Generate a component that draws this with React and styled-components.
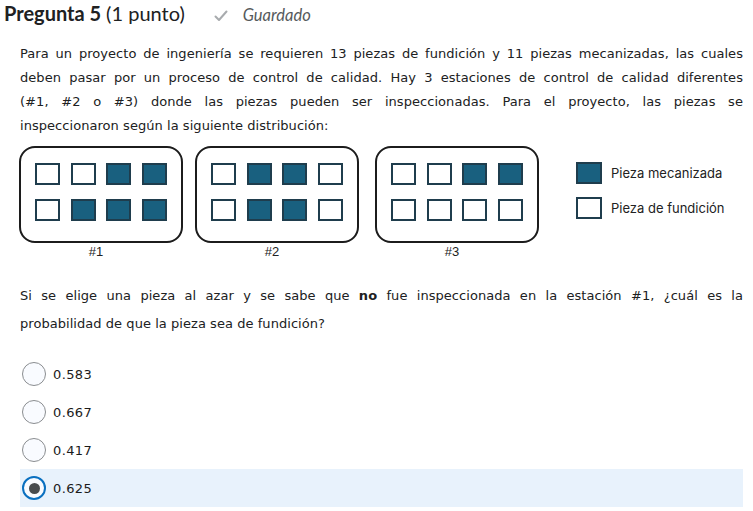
import React from "react";
import styled, { createGlobalStyle } from "styled-components";

const Global = createGlobalStyle`
  html, body { margin: 0; padding: 0; background: #fff; }
  body { font-family: "DejaVu Sans", Verdana, sans-serif; color: #202122; }
`;

const Page = styled.div`
  width: 753px;
  box-sizing: border-box;
  padding: 0 10px 0 20px;
`;

const Header = styled.div`
  display: flex;
  align-items: baseline;
  height: 32px;
  margin-left: -16px;
  padding-top: 1px;
  font-family: Lato, sans-serif;
`;

const Title = styled.h2`
  margin: 0;
  font-size: 20px;
  font-weight: 700;
  color: #202122;
`;

const Points = styled.span`
  font-size: 20px;
  font-weight: 400;
  margin-left: 5px;
  color: #202122;
`;

const Saved = styled.span`
  display: inline-flex;
  align-items: center;
  gap: 15px;
  margin-left: 29px;
  font-size: 16.5px;
  font-style: italic;
  color: #565a5c;
  svg { position: relative; top: 1px; }
`;

const Paragraph = styled.p`
  margin: ${(p) => p.$mt}px 0 0;
  font-family: "DejaVu Sans", Verdana, sans-serif;
  font-size: 13px;
  line-height: ${(p) => p.$lh}px;
  color: #202122;
  letter-spacing: 0.05px;
  b { font-weight: 700; }
`;

const Line = styled.span`
  display: block;
  text-align: justify;
  text-align-last: ${(p) => (p.$last ? "left" : "justify")};
`;

const Figure = styled.div`
  display: flex;
  align-items: flex-start;
  margin-top: 8px;
  margin-left: -1px;
  height: 122px;
`;

const Station = styled.div`
  display: flex;
  flex-direction: column;
  align-items: center;
  margin-right: ${(p) => p.$gap}px;
`;

const Tray = styled.div`
  box-sizing: border-box;
  width: 164px;
  height: 97px;
  border: 2px solid #1c1c1c;
  border-radius: 16px;
  padding: 15px 0 0;
  display: grid;
  grid-template-columns: repeat(4, 25px);
  grid-auto-rows: 22px;
  column-gap: 10.5px;
  row-gap: 14px;
  justify-content: center;
`;

const Piece = styled.div`
  box-sizing: border-box;
  width: ${(p) => p.$w || 25}px;
  height: ${(p) => p.$h || 22}px;
  border: 2px solid #1f3d4d;
  background: ${(p) => (p.$machined ? "#19607f" : "#ffffff")};
`;

const StationLabel = styled.div`
  font-family: "Liberation Sans", Arial, sans-serif;
  font-size: 13px;
  color: #222;
  margin-top: 1px;
  margin-left: -10px;
`;

const Legend = styled.div`
  display: flex;
  flex-direction: column;
  gap: 13px;
  margin-left: 37px;
  margin-top: 16px;
`;

const LegendItem = styled.div`
  display: flex;
  align-items: center;
  gap: 9px;
  font-family: Inter, "Noto Sans", sans-serif;
  font-size: 13px;
  color: #222;
`;

const Options = styled.div`
  margin-top: 17px;
  display: flex;
  flex-direction: column;
`;

const Option = styled.label`
  display: flex;
  align-items: center;
  gap: 7px;
  height: 38px;
  padding-left: 2px;
  background: ${(p) => (p.$checked ? "#e8f2fc" : "transparent")};
  font-family: "DejaVu Sans", Verdana, sans-serif;
  font-size: 13px;
  color: #1b1b1b;
  letter-spacing: 0.4px;
`;

const Radio = styled.span`
  box-sizing: border-box;
  width: 24px;
  height: 24px;
  border-radius: 50%;
  border: ${(p) => (p.$checked ? "2.5px solid #0a70c0" : "1px solid #8a8d90")};
  background: #f9fbff;
  display: flex;
  align-items: center;
  justify-content: center;
  &::after {
    content: "";
    display: ${(p) => (p.$checked ? "block" : "none")};
    width: 11px;
    height: 11px;
    border-radius: 50%;
    background: #494c4e;
  }
`;

const stations = [
  { label: "#1", gap: 12, pieces: [0, 0, 1, 1, 0, 1, 1, 1] },
  { label: "#2", gap: 16, pieces: [0, 1, 1, 0, 0, 1, 1, 0] },
  { label: "#3", gap: 0, pieces: [0, 0, 1, 1, 0, 0, 0, 0] },
];

const introLines = [
  "Para un proyecto de ingeniería se requieren 13 piezas de fundición y 11 piezas mecanizadas, las cuales",
  "deben pasar por un proceso de control de calidad. Hay 3 estaciones de control de calidad diferentes",
  "(#1, #2 o #3) donde las piezas pueden ser inspeccionadas. Para el proyecto, las piezas se",
  "inspeccionaron según la siguiente distribución:",
];

const options = ["0.583", "0.667", "0.417", "0.625"];

export default function App() {
  return (
    <>
      <Global />
      <Page>
        <Header>
          <Title>Pregunta 5</Title>
          <Points>(1 punto)</Points>
          <Saved>
            <svg width="14" height="12" viewBox="0 0 14 12" fill="none">
              <path d="M1.5 6.5 L5 10 L12.5 1.5" stroke="#a8abae" strokeWidth="2" strokeLinecap="round" strokeLinejoin="round" />
            </svg>
            Guardado
          </Saved>
        </Header>
        <Paragraph $mt={9} $lh={24}>
          {introLines.map((l, i) => (
            <Line key={i} $last={i === introLines.length - 1}>
              {l}
            </Line>
          ))}
        </Paragraph>
        <Figure>
          {stations.map((s) => (
            <Station key={s.label} $gap={s.gap}>
              <Tray>
                {s.pieces.map((m, i) => (
                  <Piece key={i} $machined={!!m} />
                ))}
              </Tray>
              <StationLabel>{s.label}</StationLabel>
            </Station>
          ))}
          <Legend>
            <LegendItem>
              <Piece $machined $w={26} />
              Pieza mecanizada
            </LegendItem>
            <LegendItem>
              <Piece $w={26} />
              Pieza de fundición
            </LegendItem>
          </Legend>
        </Figure>
        <Paragraph $mt={14} $lh={28}>
          <Line>
            Si se elige una pieza al azar y se sabe que <b>no</b> fue inspeccionada en la estación #1, ¿cuál es la
          </Line>
          <Line $last>probabilidad de que la pieza sea de fundición?</Line>
        </Paragraph>
        <Options>
          {options.map((o, i) => {
            const checked = i === 3;
            return (
              <Option key={o} $checked={checked}>
                <Radio $checked={checked} />
                {o}
              </Option>
            );
          })}
        </Options>
      </Page>
    </>
  );
}
